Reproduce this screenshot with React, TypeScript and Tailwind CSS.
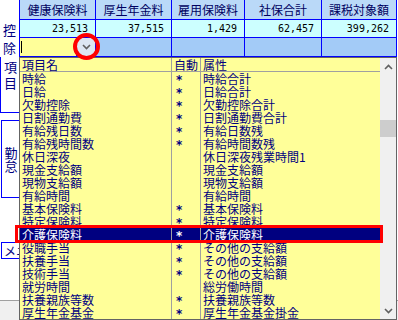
import React from "react";

const cols = [
  { label: "健康保険料", value: "23,513", w: "w-[76px]" },
  { label: "厚生年金料", value: "37,515", w: "w-[76px]" },
  { label: "雇用保険料", value: "1,429", w: "w-[73px]" },
  { label: "社保合計", value: "62,457", w: "w-[77px]" },
  { label: "課税対象額", value: "399,262", w: "w-[75px]" },
];

const items = [
  ["時給", "*", "時給合計"],
  ["日給", "*", "日給合計"],
  ["欠勤控除", "*", "欠勤控除合計"],
  ["日割通勤費", "*", "日割通勤費合計"],
  ["有給残日数", "*", "有給日数残"],
  ["有給残時間数", "*", "有給時間数残"],
  ["休日深夜", "", "休日深夜残業時間1"],
  ["現金支給額", "", "現金支給額"],
  ["現物支給額", "", "現物支給額"],
  ["有給時間", "", "有給時間"],
  ["基本保険料", "*", "基本保険料"],
  ["特定保険料", "*", "特定保険料"],
  ["介護保険料", "*", "介護保険料"],
  ["役職手当", "*", "その他の支給額"],
  ["扶養手当", "*", "その他の支給額"],
  ["技術手当", "*", "その他の支給額"],
  ["就労時間", "", "総労働時間"],
  ["扶養親族等数", "*", "扶養親族等数"],
  ["厚生年金基金", "*", "厚生年金基金掛金"],
];

const SELECTED = 12;

function Chevron({ up }: { up?: boolean }) {
  return (
    <svg width="9" height="6" viewBox="0 0 9 6">
      <path
        d={up ? "M1 5 L4.5 1.5 L8 5" : "M1 1 L4.5 4.5 L8 1"}
        fill="none"
        stroke="#606060"
        strokeWidth="1.6"
      />
    </svg>
  );
}

export default function App() {
  return (
    <div className="relative w-[398px] h-[320px] overflow-hidden bg-white font-['Noto_Sans_CJK_JP',sans-serif] text-[12px]">
      {/* top grid */}
      <div className="flex">
        <div className="w-[20px] h-[57px] border-r border-[#0000ff] flex flex-col items-center pt-[21px] text-[#000080] text-[13px] leading-[18px]">
          <span>控</span>
          <span>除</span>
        </div>
        {cols.map((c, i) => (
          <div key={i} className={`${c.w} flex flex-col border-r border-[#0000ff]`}>
            <div className="h-[20px] bg-[#bad9f8] border-b border-[#0000ff] flex items-center justify-center text-[#000060] leading-[19px]">
              {c.label}
            </div>
            <div className="h-[18px] bg-[#ccffff] border-b border-[#0000ff] flex items-center justify-end pr-[7px] font-['DejaVu_Sans_Mono',monospace] text-[10px] text-black">
              {c.value}
            </div>
            {i === 0 ? (
              <div className="h-[19px] flex border-b border-[#0000ff]">
                <div className="flex-1 bg-[#ffff99] flex items-center pl-[1px]">
                  <div className="w-[1px] h-[12px] bg-black" />
                </div>
                <div className="w-[19px] bg-[#dde6f2] border-l border-[#0000ff] flex items-center justify-center">
                  <Chevron />
                </div>
              </div>
            ) : (
              <div className="h-[19px] bg-[#a3cbf7] border-b border-[#0000ff]" />
            )}
          </div>
        ))}
      </div>

      {/* left labels below grid */}
      <div className="w-[20px] flex flex-col">
        <div className="h-[56px] border-l border-b border-[#0000ff] flex flex-col items-center pt-[2px] text-[#000080] text-[13px] leading-[16px]">
          <span>項</span>
          <span>目</span>
        </div>
        <div className="h-[7px]" />
        <div className="h-[78px] ml-[1px] border-l border-t border-b border-[#0000ff] flex flex-col items-center justify-center text-[#000080] text-[13px] leading-[13px]">
          <span>勤</span>
          <span>怠</span>
        </div>
        <div className="h-[44px]" />
        <div className="h-[17px] w-[40px] ml-[1px] border border-[#0000ff] flex items-center pl-[2px] text-[#000080] leading-[15px]">
          メニ
        </div>
        <div className="h-[41px]" />
        <div className="h-[20px] w-[398px] bg-[#f0f0f0] border-t border-[#a0a0a0]" />
      </div>

      {/* dropdown list */}
      <div className="absolute left-[19px] top-[57px] w-[378px] h-[263px] flex border border-[#646464] bg-[#ffff99] text-[#000080] leading-[13px]">
        <div className="flex-1 flex flex-col">
          <div className="flex h-[14px] border-b border-[#a0a0a0]">
            <div className="w-[152px] pl-[2px] border-r border-[#a0a0a0]">項目名</div>
            <div className="w-[29px] pl-[2px] border-r border-[#a0a0a0]">自動</div>
            <div className="flex-1 pl-[2px]">属性</div>
          </div>
          {items.map((r, i) => (
            <div
              key={i}
              className={`flex h-[13px] ${i === SELECTED ? "bg-[#000080] text-white" : ""}`}
            >
              <div className="w-[152px] pl-[2px] border-r border-[#a0a0a0] whitespace-nowrap">{r[0]}</div>
              <div className="w-[29px] pl-[4px] border-r border-[#a0a0a0] font-['DejaVu_Sans',sans-serif] font-bold text-[12px] leading-[17px]">{r[1]}</div>
              <div className="flex-1 pl-[2px] whitespace-nowrap">{r[2]}</div>
            </div>
          ))}
        </div>
        <div className="w-[16px] bg-[#f0f0f0] flex flex-col">
          <div className="h-[17px] flex items-center justify-center">
            <Chevron up />
          </div>
          <div className="mt-[45px] h-[17px] bg-[#cdcdcd]" />
          <div className="flex-1" />
          <div className="h-[17px] flex items-center justify-center">
            <Chevron />
          </div>
        </div>
      </div>

      {/* annotations */}
      <div className="absolute left-[73px] top-[33px] w-[27px] h-[27px] rounded-full border-[4px] border-[#ff0000]" />
      <div className="absolute left-[15px] top-[225px] w-[368px] h-[18px] border-[3px] border-[#ff0000]" />
    </div>
  );
}
